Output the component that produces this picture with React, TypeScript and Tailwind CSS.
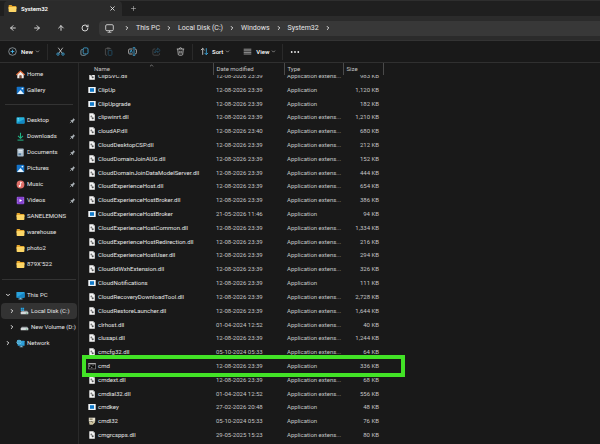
import type { ReactNode } from "react"
import { ArrowLeft, ArrowRight, ArrowUp, ChevronDown, ChevronRight, ChevronUp, Plus, RotateCw, X } from "lucide-react"
import { clsx } from "clsx"

type FileKind = "dll" | "app" | "console" | "setup"

const DLL = "Application extens..."
const APP = "Application"

const files: { name: string; date: string; type: string; size: string; kind: FileKind }[] = [
  { name: "ClipSVC.dll", date: "12-08-2026 23:39", type: DLL, size: "983 KB", kind: "dll" },
  { name: "ClipUp", date: "12-08-2026 23:39", type: APP, size: "1,120 KB", kind: "app" },
  { name: "ClipUpgrade", date: "12-08-2026 23:39", type: APP, size: "182 KB", kind: "app" },
  { name: "clipwinrt.dll", date: "12-08-2026 23:39", type: DLL, size: "1,210 KB", kind: "dll" },
  { name: "cloudAP.dll", date: "12-08-2026 23:40", type: DLL, size: "680 KB", kind: "dll" },
  { name: "CloudDesktopCSP.dll", date: "12-08-2026 23:39", type: DLL, size: "212 KB", kind: "dll" },
  { name: "CloudDomainJoinAUG.dll", date: "12-08-2026 23:39", type: DLL, size: "152 KB", kind: "dll" },
  { name: "CloudDomainJoinDataModelServer.dll", date: "12-08-2026 23:39", type: DLL, size: "444 KB", kind: "dll" },
  { name: "CloudExperienceHost.dll", date: "12-08-2026 23:39", type: DLL, size: "654 KB", kind: "dll" },
  { name: "CloudExperienceHostBroker.dll", date: "12-08-2026 23:39", type: DLL, size: "386 KB", kind: "dll" },
  { name: "CloudExperienceHostBroker", date: "21-05-2026 11:46", type: APP, size: "94 KB", kind: "app" },
  { name: "CloudExperienceHostCommon.dll", date: "12-08-2026 23:39", type: DLL, size: "1,334 KB", kind: "dll" },
  { name: "CloudExperienceHostRedirection.dll", date: "12-08-2026 23:39", type: DLL, size: "216 KB", kind: "dll" },
  { name: "CloudExperienceHostUser.dll", date: "12-08-2026 23:39", type: DLL, size: "294 KB", kind: "dll" },
  { name: "CloudIdWxhExtension.dll", date: "12-08-2026 23:39", type: DLL, size: "326 KB", kind: "dll" },
  { name: "CloudNotifications", date: "12-08-2026 23:39", type: APP, size: "111 KB", kind: "app" },
  { name: "CloudRecoveryDownloadTool.dll", date: "12-08-2026 23:39", type: DLL, size: "2,728 KB", kind: "dll" },
  { name: "CloudRestoreLauncher.dll", date: "12-08-2026 23:39", type: DLL, size: "1,644 KB", kind: "dll" },
  { name: "clrhost.dll", date: "01-04-2024 12:52", type: DLL, size: "40 KB", kind: "dll" },
  { name: "clusapi.dll", date: "12-08-2026 23:39", type: DLL, size: "1,244 KB", kind: "dll" },
  { name: "cmcfg32.dll", date: "05-10-2024 05:33", type: DLL, size: "64 KB", kind: "dll" },
  { name: "cmd", date: "12-08-2026 23:39", type: APP, size: "336 KB", kind: "console" },
  { name: "cmdext.dll", date: "12-08-2026 23:39", type: DLL, size: "68 KB", kind: "dll" },
  { name: "cmdial32.dll", date: "01-04-2024 12:52", type: DLL, size: "556 KB", kind: "dll" },
  { name: "cmdkey", date: "27-02-2026 20:48", type: APP, size: "48 KB", kind: "app" },
  { name: "cmdl32", date: "05-10-2024 05:33", type: APP, size: "76 KB", kind: "setup" },
  { name: "cmgrcspps.dll", date: "29-05-2025 15:23", type: DLL, size: "80 KB", kind: "dll" },
]

export default function App() {
  return (
    <div className="flex h-screen flex-col overflow-hidden bg-[#191919] font-[Roboto,'Noto_Sans',sans-serif] text-[6px] leading-[8px] text-[#e6e6e6]">
      <TabBar />
      <NavBar />
      <Toolbar />
      <div className="flex min-h-0 flex-1">
        <Sidebar />
        <main className="flex min-w-0 flex-1 flex-col pl-[7px]">
          <FileList />
        </main>
      </div>
    </div>
  )
}

function TabBar() {
  return (
    <header className="flex h-4 shrink-0 border-t border-[#2e2e2e] bg-[#1f1f1f] pl-1">
      <div className="flex w-[118px] items-center rounded-t-sm bg-[#2b2b2b] pr-1.5 pl-1">
        <FolderIcon />
        <span className="ml-1 flex-1 font-semibold text-white">System32</span>
        <button aria-label="Close tab">
          <X className="size-[7px]" strokeWidth={3} />
        </button>
      </div>
      <button aria-label="New tab" className="ml-2 text-[#c0c0c0]">
        <Plus className="size-[7px]" />
      </button>
    </header>
  )
}

function NavBar() {
  const path = ["This PC", "Local Disk (C:)", "Windows", "System32"]
  return (
    <nav className="flex h-[25px] shrink-0 items-center border-b border-[#333] bg-[#2b2b2b] pl-px text-[7px]">
      <NavButton label="Back"><ArrowLeft className="size-2" strokeWidth={3} /></NavButton>
      <NavButton label="Forward"><ArrowRight className="size-2" strokeWidth={3} /></NavButton>
      <NavButton label="Up"><ArrowUp className="size-2" strokeWidth={3} /></NavButton>
      <NavButton label="Refresh"><RotateCw className="size-2" strokeWidth={3} /></NavButton>
      <div className="ml-0.5 flex h-[15px] flex-1 items-center rounded-l-sm bg-[#383838] pl-1.5">
        <svg viewBox="0 0 9 9" className="mr-1 size-[9px]" fill="none" stroke="#d4d4d4">
          <rect x="0.7" y="0.7" width="7.6" height="6" rx="1.2" strokeWidth="0.9" />
          <path d="M2.6 8.3h3.8M4.5 6.8v1.4" strokeWidth="0.8" />
        </svg>
        <ol className="flex items-center">
          {path.map((part) => (
            <li key={part} className="flex items-center">
              <ChevronRight className="mx-1.5 size-[6px]" strokeWidth={4} />
              <a href="#">{part}</a>
            </li>
          ))}
        </ol>
        <ChevronRight className="mx-1.5 size-[6px]" strokeWidth={4} />
      </div>
    </nav>
  )
}

function NavButton({ label, children }: { label: string; children: ReactNode }) {
  return (
    <button aria-label={label} className="flex w-6 items-center justify-center text-[#d6d6d6]">
      {children}
    </button>
  )
}

function Toolbar() {
  return (
    <div className="flex h-[22px] shrink-0 items-center border-b border-[#303030] text-white">
      <button className="flex w-[47px] items-center pl-2">
        <svg viewBox="0 0 9 9" className="size-[9px]" fill="none">
          <circle cx="4.5" cy="4.5" r="3.8" stroke="#a9b4bb" strokeWidth="0.7" />
          <path d="M4.5 2.7v3.6M2.7 4.5h3.6" stroke="#45b3e8" strokeWidth="0.9" />
        </svg>
        <span className="mr-0.5 ml-1 font-medium">New</span>
        <ChevronDown className="size-[5px] text-[#999]" strokeWidth={4} />
      </button>
      <Separator />
      <ToolButton label="Cut">
        <path d="M2.2 0.7 6.3 6.4M6.8 0.7 2.7 6.4" stroke="#d0d0d0" />
        <circle cx="2" cy="7.1" r="1.2" stroke="#3fa9de" />
        <circle cx="7" cy="7.1" r="1.2" stroke="#3fa9de" />
      </ToolButton>
      <ToolButton label="Copy">
        <path d="M2.8 2.5H2.2a1.3 1.3 0 0 0-1.3 1.3v3.2a1.3 1.3 0 0 0 1.3 1.3h2.6a1.2 1.2 0 0 0 1.2-.9" stroke="#8fa9b6" />
        <rect x="3.2" y="0.9" width="4.8" height="6" rx="1.2" stroke="#42aee2" />
      </ToolButton>
      <ToolButton label="Paste">
        <path d="M3 8.2H2.2a.8.8 0 0 1-.8-.8V2.2a.8.8 0 0 1 .8-.8h4a.8.8 0 0 1 .8.8M3 .9h2.4v1H3z" stroke="#555" />
        <rect x="4.2" y="3.3" width="3.7" height="5" rx="0.7" stroke="#25516a" />
      </ToolButton>
      <ToolButton label="Rename">
        <path d="M4.6 2H1.7A1.1 1.1 0 0 0 .6 3.1v2.8A1.1 1.1 0 0 0 1.7 7h2.9M7.1 2a1.2 1.2 0 0 1 1.3 1.2v2.6A1.2 1.2 0 0 1 7.1 7" stroke="#c4c4c4" />
        <path d="M2 5.8 3.2 3l1.2 2.8M4.8.7h2.4M6 .7v7.6M4.8 8.3h2.4" stroke="#3fa9de" />
      </ToolButton>
      <ToolButton label="Share">
        <path d="M3.3 2H2A1.1 1.1 0 0 0 .9 3.1v4A1.1 1.1 0 0 0 2 8.2h4.4a1.1 1.1 0 0 0 1.1-1.1v-.8" stroke="#4c4c4c" />
        <path d="M5.6 1.1 8.2 3.4 5.6 5.7V4.3C4.2 4.3 3.4 4.8 2.8 6c0-2 1-3.3 2.8-3.5z" stroke="#28546c" />
      </ToolButton>
      <ToolButton label="Delete">
        <path d="M.8 2h7.4M3.3 1.9a1.2 1.2 0 0 1 2.4 0M1.7 2.1l.6 5.3a.9.9 0 0 0 .9.8h2.6a.9.9 0 0 0 .9-.8l.6-5.3M3.8 3.8v2.7M5.2 3.8v2.7" stroke="#c8c8c8" />
      </ToolButton>
      <Separator />
      <button className="ml-[7px] flex items-center">
        <svg viewBox="0 0 9 9" className="size-[9px]" fill="none" strokeWidth="0.9">
          <path d="M2.7 7.8V1.3M.9 3.1l1.8-1.8 1.8 1.8" stroke="#c8c8c8" />
          <path d="M6.3 1.2v6.5M4.5 5.9l1.8 1.8 1.8-1.8" stroke="#3fa9de" />
        </svg>
        <span className="mr-0.5 ml-[3px] font-medium">Sort</span>
        <ChevronDown className="size-[5px] text-[#999]" strokeWidth={4} />
      </button>
      <button className="ml-[13px] flex items-center">
        <svg viewBox="0 0 9 9" className="size-[9px]" stroke="#b4b4b4" strokeWidth="0.8">
          <path d="M.7 2.2h7.6M.7 3.8h7.6M.7 5.4h7.6M.7 7h7.6" />
        </svg>
        <span className="mr-0.5 ml-1 font-medium">View</span>
        <ChevronDown className="size-[5px] text-[#999]" strokeWidth={4} />
      </button>
      <div className="ml-1.5 flex">
        <Separator />
      </div>
      <button aria-label="See more" className="ml-[7px]">
        <svg viewBox="0 0 10 4" className="h-1 w-2.5" fill="#eee">
          <circle cx="1.7" cy="2" r="0.9" />
          <circle cx="5" cy="2" r="0.9" />
          <circle cx="8.3" cy="2" r="0.9" />
        </svg>
      </button>
    </div>
  )
}

function Separator() {
  return <span className="h-4 w-px bg-[#2a2a2a]" />
}

function ToolButton({ label, children }: { label: string; children: ReactNode }) {
  return (
    <button aria-label={label} className="flex w-6 items-center justify-center">
      <svg viewBox="0 0 9 9" className="size-[9px]" fill="none" strokeWidth="0.8">
        {children}
      </svg>
    </button>
  )
}

function Sidebar() {
  return (
    <aside className="w-[79px] shrink-0 border-r border-[#2a2a2a] pt-[3px]">
      <SideItem label="Home" icon={<HomeIcon />} />
      <SideItem label="Gallery" icon={<PictureIcon />} />
      <hr className="mx-[5px] mt-1.5 mb-[7px] border-[#333]" />
      <SideItem label="Desktop" icon={<DesktopIcon />} pinned />
      <SideItem label="Downloads" icon={<DownloadIcon />} pinned />
      <SideItem label="Documents" icon={<DocumentIcon />} pinned />
      <SideItem label="Pictures" icon={<PictureIcon />} pinned />
      <SideItem label="Music" icon={<MusicIcon />} pinned />
      <SideItem label="Videos" icon={<VideoIcon />} pinned />
      <SideItem label="SANELEMONS" icon={<FolderIcon />} />
      <SideItem label="warehouse" icon={<FolderIcon />} />
      <SideItem label="photo2" icon={<FolderIcon />} />
      <SideItem label="879X'522" icon={<FolderIcon />} />
      <hr className="mx-0.5 my-[7px] border-[#333]" />
      <SideItem label="This PC" icon={<ComputerIcon />} tree="open" />
      <SideItem label="Local Disk (C:)" icon={<DriveIcon system />} tree="closed" nested selected />
      <SideItem label="New Volume (D:)" icon={<DriveIcon />} tree="closed" nested />
      <SideItem label="Network" icon={<NetworkIcon />} tree="closed" />
    </aside>
  )
}

type SideItemProps = {
  label: string
  icon: ReactNode
  pinned?: boolean
  tree?: "open" | "closed"
  nested?: boolean
  selected?: boolean
}

function SideItem({ label, icon, pinned, tree, nested, selected }: SideItemProps) {
  return (
    <a
      href="#"
      className={clsx(
        "mx-px flex h-4 items-center rounded-sm whitespace-nowrap",
        nested ? "pl-2" : "pl-1",
        selected && "bg-[#333]",
      )}
    >
      <span className="w-[11px]">
        {tree === "open" && <ChevronDown className="size-[6px]" strokeWidth={4} />}
        {tree === "closed" && <ChevronRight className="size-[6px]" strokeWidth={4} />}
      </span>
      {icon}
      <span className="ml-0.5 flex-1">{label}</span>
      {pinned && <PinIcon />}
    </a>
  )
}

function Columns() {
  return (
    <colgroup>
      <col className="w-[127px]" />
      <col className="w-[71px]" />
      <col className="w-[59px]" />
      <col className="w-10" />
      <col />
    </colgroup>
  )
}

function FileList() {
  return (
    <>
      <div className="relative shrink-0">
        <ChevronUp className="absolute top-0 left-[63px] size-[5px] text-[#aaa]" strokeWidth={3} />
        <table className="h-3 w-[315px] table-fixed text-left text-[#c4c4c4]">
          <Columns />
          <thead>
            <tr>
              <th className="border-r border-[#4a4a4a] pl-2 font-normal">Name</th>
              <th className="border-r border-[#4a4a4a] pl-[3px] font-normal">Date modified</th>
              <th className="border-r border-[#4a4a4a] pl-[3px] font-normal">Type</th>
              <th className="border-r border-[#4a4a4a] pl-[3px] font-normal">Size</th>
              <td />
            </tr>
          </thead>
        </table>
      </div>
      {/* list is scrolled a little, so the first row slides under the header */}
      <div className="-ml-[7px] min-h-0 flex-1 overflow-hidden pl-[7px]">
        <table className="-mt-1.5 h-[373px] w-[315px] table-fixed whitespace-nowrap text-[#c4c4c4]">
          <Columns />
          <tbody>
            {files.map((file) => (
              <tr key={file.name} className={clsx(file.name === "cmd" && "outline-4 outline-[#42e326]")}>
                <td className="pl-0.5 text-[#e6e6e6]">
                  <span className="flex items-center gap-0.5">
                    <FileIcon kind={file.kind} />
                    {file.name}
                  </span>
                </td>
                <td className="pl-[3px]">{file.date}</td>
                <td className="pl-[3px]">{file.type}</td>
                <td className="pr-1 text-right">{file.size}</td>
                <td />
              </tr>
            ))}
          </tbody>
        </table>
      </div>
    </>
  )
}

function FileIcon({ kind }: { kind: FileKind }) {
  return (
    <svg viewBox="0 0 8 8" className="size-2">
      {kind === "dll" && (
        <>
          <path d="M1.3.2h3.9l1.6 1.6v6H1.3z" fill="#f4f4f4" />
          <path d="M5.2.2v1.6h1.6z" fill="#a8a8a8" />
          <circle cx="3.4" cy="3.5" r="0.9" fill="#777" />
          <circle cx="4.7" cy="5.2" r="1" fill="#555" />
        </>
      )}
      {kind === "app" && (
        <>
          <path d="M.3 1h7.4v6H.3z" fill="#eef3f6" />
          <path d="M2 2.2h4v3.6H2z" fill="#0f78c8" />
        </>
      )}
      {kind === "console" && (
        <>
          <path d="M.2 1h7.6v6.2H.2z" fill="#a9a9a9" />
          <path d="M.7 2.4h6.6v4.3H.7z" fill="#0c0c0c" />
          <path d="m1.2 3.2 1 .8-1 .8M3 5.4h1.4M4.6 3.4h.9" fill="none" stroke="#ddd" strokeWidth="0.6" />
        </>
      )}
      {kind === "setup" && (
        <>
          <path d="M.8.7h6.4v3.9H.8z" fill="#e9e4d2" />
          <path d="M1.6 1.4h3v1.6h-3z" fill="#9a927a" />
          <path d="M1 5h3.6l1.7-2.3L7 5.6 4.7 7.7H1.6z" fill="#cfc6a4" />
          <path d="m3.2 4.2 1.6 1.5" stroke="#6d5c33" strokeWidth="0.7" />
        </>
      )}
    </svg>
  )
}

function FolderIcon() {
  return (
    <svg viewBox="0 0 9 9" className="size-[9px] shrink-0">
      <path d="M.6 1.7c0-.4.3-.7.7-.7h2.2l1 1h3.2c.4 0 .7.3.7.7V5H.6z" fill="#e5a52b" />
      <path d="M.6 3h7.8v4.3c0 .4-.3.7-.7.7H1.3c-.4 0-.7-.3-.7-.7z" fill="#fcd667" />
    </svg>
  )
}

function HomeIcon() {
  return (
    <svg viewBox="0 0 9 9" className="size-[9px] shrink-0">
      <path d="M1.3 4 4.5 1.3 7.7 4v4.3H5.4V5.6H3.6v2.7H1.3z" fill="#eeeae6" />
      <path d="M3.6 5.5h1.8v2.8H3.6z" fill="#8d4d33" />
      <path d="M.6 4.7 4.5 1.1l3.9 3.6" fill="none" stroke="#e86a35" strokeWidth="1.1" strokeLinecap="round" />
    </svg>
  )
}

function PictureIcon() {
  return (
    <svg viewBox="0 0 9 9" className="size-[9px] shrink-0">
      <rect x="0.7" y="0.7" width="7.6" height="7.6" rx="0.9" fill="#1473c9" />
      <path d="m1 8 3.5-3.9L8 8z" fill="#e8f6ff" />
      <circle cx="6.4" cy="2.6" r="0.9" fill="#e8f6ff" />
    </svg>
  )
}

function DesktopIcon() {
  return (
    <svg viewBox="0 0 9 9" className="size-[9px] shrink-0">
      <rect x="0.5" y="1.2" width="8" height="6.4" rx="0.7" fill="#26b3dc" />
      <path d="M.5 7.2 8.5 3v4c0 .4-.3.6-.6.6H1.1z" fill="#1287c5" />
      <path d="M1.6 2.5h1.2M1.6 4h1.2" stroke="#a8ecff" strokeWidth="0.7" />
    </svg>
  )
}

function DownloadIcon() {
  return (
    <svg viewBox="0 0 9 9" className="size-[9px] shrink-0" fill="none" stroke="#1fb587">
      <path d="M4.5.8v5.3M2 3.9l2.5 2.4L7 3.9" strokeWidth="1.1" />
      <path d="M1.5 8.1h6" strokeWidth="1" />
    </svg>
  )
}

function DocumentIcon() {
  return (
    <svg viewBox="0 0 9 9" className="size-[9px] shrink-0">
      <rect x="1.3" y="0.5" width="6.4" height="8" rx="0.7" fill="#a9bccb" />
      <path d="M2.5 2.4h4M2.5 4h4" stroke="#f3f8fb" strokeWidth="0.8" />
      <path d="M2.5 5.4h2.4v1.8H2.5z" fill="#4c779b" />
    </svg>
  )
}

function MusicIcon() {
  return (
    <svg viewBox="0 0 9 9" className="size-[9px] shrink-0">
      <circle cx="4.5" cy="4.5" r="3.9" fill="#df6f69" />
      <path d="M4.5 5.8V2.2l1.7.8" fill="none" stroke="#fff" strokeWidth="0.8" />
      <circle cx="3.7" cy="5.9" r="1" fill="#fff" />
    </svg>
  )
}

function VideoIcon() {
  return (
    <svg viewBox="0 0 9 9" className="size-[9px] shrink-0">
      <rect x="0.7" y="0.8" width="7.6" height="7.4" rx="0.9" fill="#8442ce" />
      <path d="M1.6 1.5v6M7.4 1.5v6" stroke="#c8a2f2" strokeWidth="0.6" strokeDasharray="0.8 0.7" />
      <path d="M3.5 2.9v3.2l2.6-1.6z" fill="#fff" />
    </svg>
  )
}

function ComputerIcon() {
  return (
    <svg viewBox="0 0 9 9" className="size-[9px] shrink-0">
      <rect x="0.4" y="0.9" width="8.2" height="5.8" rx="0.6" fill="#2aa3dc" />
      <path d="M.4 6.2 8.6 1.7v4.4c0 .4-.2.6-.6.6H1z" fill="#1785c4" />
      <path d="M3.7 6.7h1.6v1H3.7zM2.5 7.6h4v.8h-4z" fill="#7fb8d6" />
    </svg>
  )
}

function DriveIcon({ system }: { system?: boolean }) {
  return (
    <svg viewBox="0 0 9 9" className="size-[9px] shrink-0">
      {system && (
        <path d="M.8.8h1.5v1.5H.8zM2.6.8h1.5v1.5H2.6zM.8 2.6h1.5v1.5H.8zM2.6 2.6h1.5v1.5H2.6z" fill="#25a5e6" />
      )}
      <path d="M1.8 3.8h5.4l1.1 1.5H.7z" fill="#9ba1a5" />
      <rect x="0.7" y="5" width="7.6" height="2.3" rx="0.5" fill="#d5d9db" />
      <path d="M5.8 6.2h1.6" stroke="#379b62" strokeWidth="0.7" />
    </svg>
  )
}

function NetworkIcon() {
  return (
    <svg viewBox="0 0 9 9" className="size-[9px] shrink-0">
      <rect x="1.7" y="1.8" width="6.9" height="5" rx="0.5" fill="#2c9fda" />
      <circle cx="3" cy="3.2" r="2.4" fill="#6fcbed" />
      <path d="M.8 3.2h4.4M3 .8c-1.4 1.6-1.4 3.2 0 4.8M3 .8c1.4 1.6 1.4 3.2 0 4.8" fill="none" stroke="#176f9f" strokeWidth="0.4" />
      <path d="M4.6 6.8h1.5v.9H4.6zM3.5 7.6h3.7v.7H3.5z" fill="#80b7d2" />
    </svg>
  )
}

function PinIcon() {
  return (
    <svg viewBox="0 0 7 7" className="mr-px size-[7px] shrink-0">
      <path d="m4 .9 2.1 2.1-.7.3-1 1-.2 1.2-.6.5-2.2-2.2.5-.6 1.2-.2 1-1z" fill="#a9b0b5" />
      <path d="M2.4 4.6.9 6.1" stroke="#a9b0b5" strokeWidth="0.7" />
    </svg>
  )
}
